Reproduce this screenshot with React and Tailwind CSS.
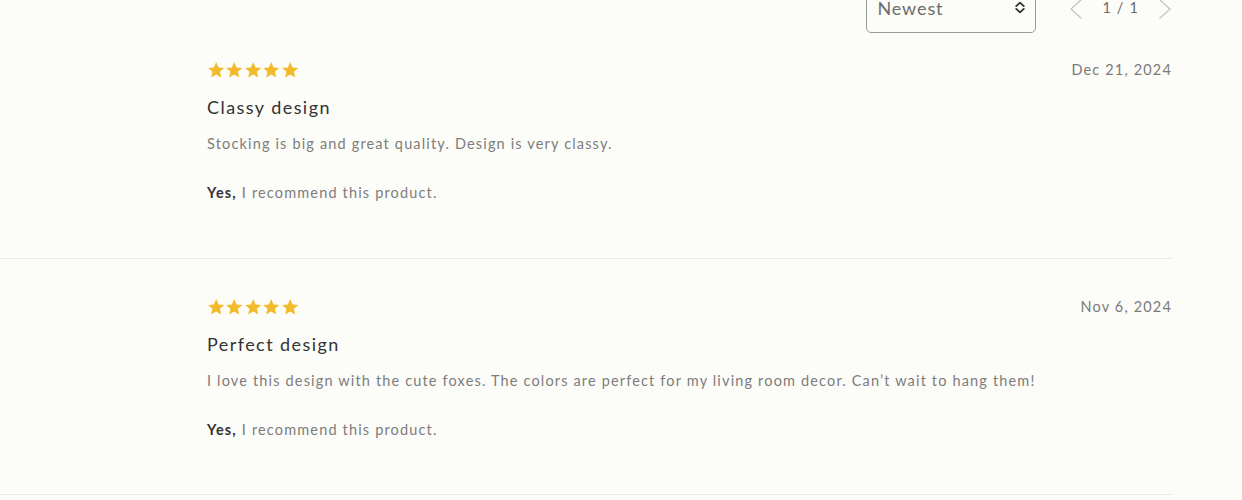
import React from 'react'

const reviews = [
  {
    id: 1,
    rating: 5,
    date: 'Dec 21, 2024',
    title: 'Classy design',
    body: 'Stocking is big and great quality. Design is very classy.',
  },
  {
    id: 2,
    rating: 5,
    date: 'Nov 6, 2024',
    title: 'Perfect design',
    body: 'I love this design with the cute foxes. The colors are perfect for my living room decor. Can’t wait to hang them!',
  },
]

function Star() {
  return (
    <svg viewBox="0 0 24 24" className="w-[18.4px] h-[18px]" fill="#f1bb2b">
      <path d="M12 1.4l3.1 7.1 7.7.7-5.85 5.1 1.74 7.55L12 17.9l-6.69 3.95 1.74-7.55L1.2 9.2l7.7-.7z" />
    </svg>
  )
}

function Stars({ count }) {
  return (
    <div className="flex h-[18px] items-center">
      {Array.from({ length: count }).map((_, i) => (
        <Star key={i} />
      ))}
    </div>
  )
}

function ReviewRow({ review, first }) {
  return (
    <div className={`border-b border-[#ecebe6] pl-[207px] ${first ? 'pt-[27px] pb-[55px]' : 'pt-[38px] pb-[54px]'}`}>
      <div className="flex items-center justify-between">
        <Stars count={review.rating} />
        <span className="text-[14.5px] leading-5 tracking-[0.08em] text-[#7a7a7a]">{review.date}</span>
      </div>
      <h3 className="mt-[15px] text-[18px] leading-6 tracking-[0.08em] text-[#333333]">{review.title}</h3>
      <p className="mt-[15px] text-[14.5px] leading-5 tracking-[0.08em] text-[#7d7d7d]">{review.body}</p>
      <p className="mt-[29px] text-[14.5px] leading-5 tracking-[0.08em] text-[#7d7d7d]">
        <span className="font-bold text-[#333333]">Yes,</span> I recommend this product.
      </p>
    </div>
  )
}

export default function App() {
  return (
    <div
      className="min-h-[500px] overflow-hidden bg-[#fcfcf8]"
      style={{ fontFamily: 'Lato, "Open Sans", sans-serif' }}
    >
      <div className="w-[1172px]">
        {/* Sort + pagination */}
        <div className="flex items-start justify-end">
          <div className="-mt-[13px] flex h-[46px] w-[170px] items-end justify-between rounded-[5px] border border-[#9a9a9a] pb-[12px] pl-[10px] pr-[9px]">
            <span className="text-[18px] leading-6 tracking-[0.05em] text-[#6b6b6b]">Newest</span>
            <svg viewBox="0 0 12 16" className="mb-[5px] w-[12px] h-[15px]" fill="none" stroke="#333" strokeWidth="2" strokeLinecap="round" strokeLinejoin="round">
              <path d="M2 6.5L6 2.8 10 6.5M2 9.5L6 13.2 10 9.5" />
            </svg>
          </div>
          <div className="ml-[33px] flex items-center gap-[19px]">
            <svg viewBox="0 0 14 20" className="-mt-[1px] w-[14px] h-[20px]" fill="none" stroke="#c4c4c4" strokeWidth="1.3">
              <path d="M12.5 0.5L2 10l10.5 9.5" />
            </svg>
            <span className="text-[14.5px] leading-5 tracking-[0.08em] text-[#6b6b6b] -mt-[4px]">1 / 1</span>
            <svg viewBox="0 0 14 20" className="-mt-[1px] w-[14px] h-[20px]" fill="none" stroke="#c4c4c4" strokeWidth="1.3">
              <path d="M1.5 0.5L12 10 1.5 19.5" />
            </svg>
          </div>
        </div>

        {reviews.map((r, i) => (
          <ReviewRow key={r.id} review={r} first={i === 0} />
        ))}
      </div>
    </div>
  )
}
